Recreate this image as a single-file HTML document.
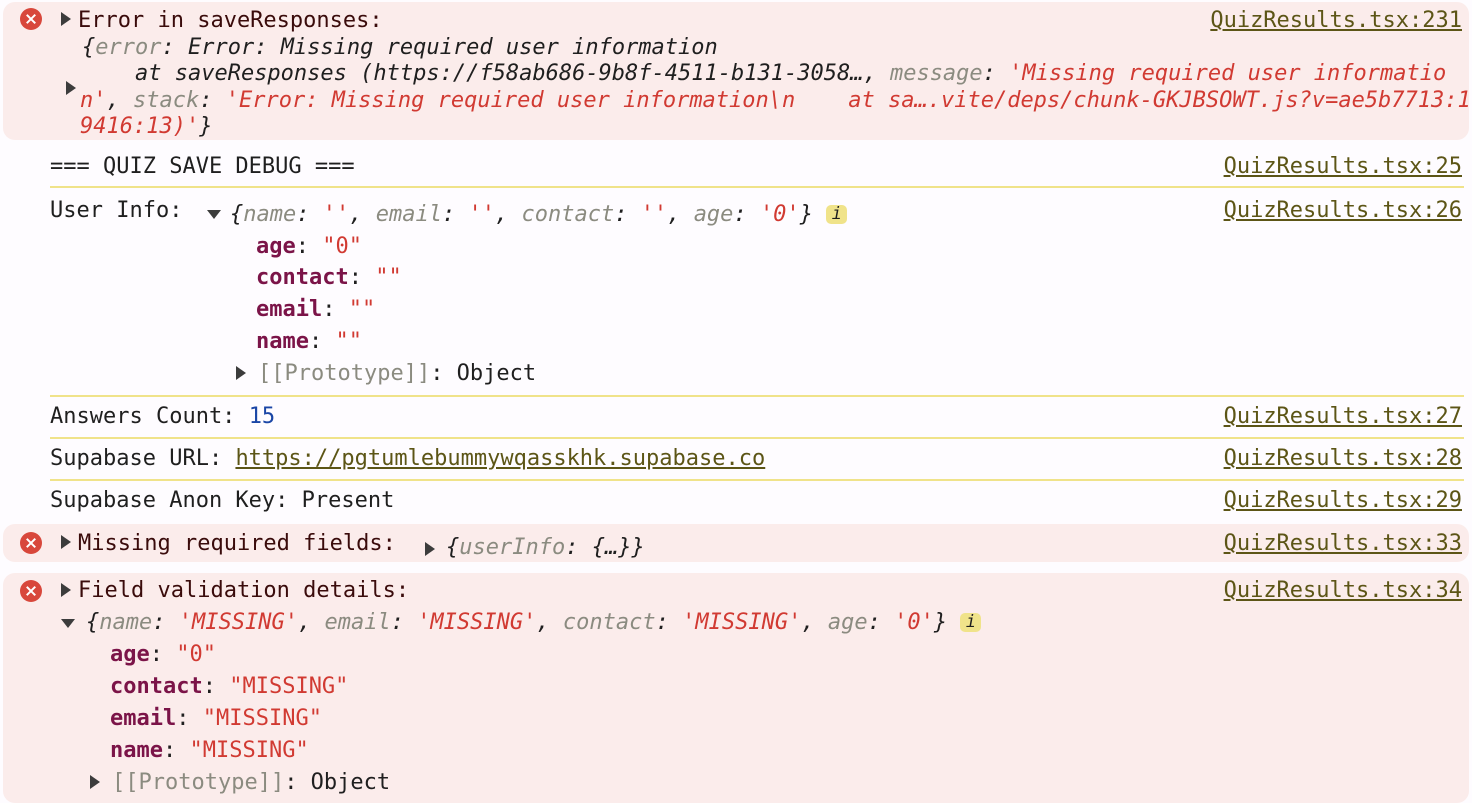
<!DOCTYPE html>
<html><head><meta charset="utf-8"><style>
body{margin:0;width:1472px;height:796px;background:#fefcff;overflow:hidden;position:relative;font-family:"DejaVu Sans Mono","Liberation Mono",monospace;font-size:22px;color:#1f1f1f}
.l{position:absolute;white-space:pre;line-height:26px;height:26px;margin-top:2px}
.err{position:absolute;background:#fbeceb;border-radius:12px;left:3px;right:3px}
.hr{position:absolute;left:50px;right:8px;height:2px;background:#f0e38a}
.ic{position:absolute;width:22px;height:22px;border-radius:50%;background:#d8473b}
.ic:before,.ic:after{content:"";position:absolute;left:10px;top:5px;width:2.2px;height:12px;background:#fff;transform:rotate(45deg)}
.ic:after{transform:rotate(-45deg)}
.tr{position:absolute;width:0;height:0;border-top:7px solid transparent;border-bottom:7px solid transparent;border-left:10px solid #3c3c3c}
.td{position:absolute;width:0;height:0;border-left:7px solid transparent;border-right:7px solid transparent;border-top:9px solid #3c3c3c}
.lk{position:absolute;right:10px;color:#5c5516;text-decoration:underline;white-space:pre;line-height:26px;margin-top:2px}
.k{color:#8b8b80;font-style:italic}
.s{color:#d13a32}
.i{font-style:italic}
.b{color:#7b1448;font-weight:bold}
.et{color:#3a0b0b}
.g{color:#8b8b80}
.n{color:#1a46a6}
.badge{display:inline-block;background:#f0e38a;border-radius:5px;width:21px;height:19px;line-height:19px;text-align:center;font-size:17px;font-style:italic;vertical-align:2px}
</style></head><body>
<div class="err" style="top:2px;height:138px"></div>
<div class="ic" style="left:20px;top:8px"></div>
<div class="tr" style="left:61px;top:12px"></div>
<div class="l et" style="left:78px;top:6px">Error in saveResponses:</div>
<div class="lk" style="top:6px">QuizResults.tsx:231</div>
<div class="l i" style="left:82px;top:33px">{<span class="k">error</span>: Error: Missing required user information</div>
<div class="l i" style="left:82px;top:59px">    at saveResponses (https://f58ab686-9b8f-4511-b131-3058…, <span class="k">message</span>: <span class="s">'Missing required user informatio</span></div>
<div class="tr" style="left:66px;top:81px"></div>
<div class="l i" style="left:80px;top:86px"><span class="s">n'</span>, <span class="k">stack</span>: <span class="s">'Error: Missing required user information\n    at sa….vite/deps/chunk-GKJBSOWT.js?v=ae5b7713:1</span></div>
<div class="l i" style="left:80px;top:112px"><span class="s">9416:13)'</span>}</div>

<div class="l" style="left:50px;top:152px">=== QUIZ SAVE DEBUG ===</div>
<div class="lk" style="top:152px">QuizResults.tsx:25</div>
<div class="hr" style="top:186px"></div>

<div class="l" style="left:50px;top:196px">User Info:</div>
<div class="lk" style="top:196px">QuizResults.tsx:26</div>
<div class="td" style="left:207px;top:210px"></div>
<div class="l i" style="left:230px;top:200px">{<span class="k">name</span>: <span class="s">''</span>, <span class="k">email</span>: <span class="s">''</span>, <span class="k">contact</span>: <span class="s">''</span>, <span class="k">age</span>: <span class="s">'0'</span>} <span class="badge">i</span></div>
<div class="l" style="left:256px;top:232px"><span class="b">age</span>: <span class="s">"0"</span></div>
<div class="l" style="left:256px;top:263px"><span class="b">contact</span>: <span class="s">""</span></div>
<div class="l" style="left:256px;top:295px"><span class="b">email</span>: <span class="s">""</span></div>
<div class="l" style="left:256px;top:327px"><span class="b">name</span>: <span class="s">""</span></div>
<div class="tr" style="left:236px;top:366px"></div>
<div class="l" style="left:258px;top:359px"><span class="g">[[Prototype]]</span>: Object</div>
<div class="hr" style="top:395px"></div>

<div class="l" style="left:50px;top:402px">Answers Count: <span class="n">15</span></div>
<div class="lk" style="top:402px">QuizResults.tsx:27</div>
<div class="hr" style="top:437px"></div>
<div class="l" style="left:50px;top:444px">Supabase URL: <span style="color:#5c5516;text-decoration:underline">https://pgtumlebummywqasskhk.supabase.co</span></div>
<div class="lk" style="top:444px">QuizResults.tsx:28</div>
<div class="hr" style="top:479px"></div>
<div class="l" style="left:50px;top:486px">Supabase Anon Key: Present</div>
<div class="lk" style="top:486px">QuizResults.tsx:29</div>

<div class="err" style="top:524px;height:38px"></div>
<div class="ic" style="left:20px;top:532px"></div>
<div class="tr" style="left:61px;top:535px"></div>
<div class="l et" style="left:78px;top:529px">Missing required fields:</div>
<div class="tr" style="left:425px;top:542px"></div>
<div class="l i" style="left:446px;top:533px">{<span class="k">userInfo</span>: {…}}</div>
<div class="lk" style="top:529px">QuizResults.tsx:33</div>

<div class="err" style="top:573px;height:230px"></div>
<div class="ic" style="left:20px;top:580px"></div>
<div class="tr" style="left:61px;top:583px"></div>
<div class="l et" style="left:78px;top:576px">Field validation details:</div>
<div class="lk" style="top:576px">QuizResults.tsx:34</div>
<div class="td" style="left:61px;top:619px"></div>
<div class="l i" style="left:86px;top:608px">{<span class="k">name</span>: <span class="s">'MISSING'</span>, <span class="k">email</span>: <span class="s">'MISSING'</span>, <span class="k">contact</span>: <span class="s">'MISSING'</span>, <span class="k">age</span>: <span class="s">'0'</span>} <span class="badge">i</span></div>
<div class="l" style="left:110px;top:640px"><span class="b">age</span>: <span class="s">"0"</span></div>
<div class="l" style="left:110px;top:672px"><span class="b">contact</span>: <span class="s">"MISSING"</span></div>
<div class="l" style="left:110px;top:704px"><span class="b">email</span>: <span class="s">"MISSING"</span></div>
<div class="l" style="left:110px;top:736px"><span class="b">name</span>: <span class="s">"MISSING"</span></div>
<div class="tr" style="left:90px;top:775px"></div>
<div class="l" style="left:112px;top:768px"><span class="g">[[Prototype]]</span>: Object</div>
</body></html>
